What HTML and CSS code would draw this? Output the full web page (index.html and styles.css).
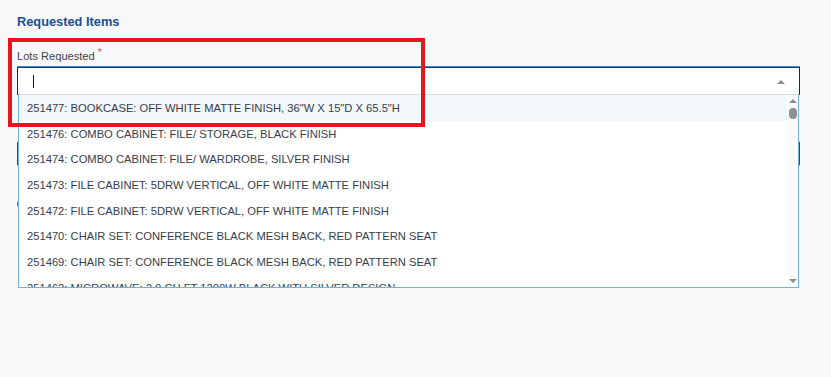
FILE: index.html
```html
<!DOCTYPE html>
<html lang="en">
<head>
    <meta charset="UTF-8">
    <meta name="viewport" content="width=device-width, initial-scale=1.0">
    <title>Requested Items</title>
    <link rel="stylesheet" href="styles.css">
</head>
<body>
    <div class="section">
        <h2 class="section-title">Requested Items</h2>
        <div class="form-group">
            <label for="lots">Lots Requested<span class="required">*</span></label>
            <div class="select-box">
                <div class="select-input">
                    <span class="caret"></span>
                    <span class="arrow-up"></span>
                </div>
                <ul class="options">
                    <li class="active">251477: BOOKCASE: OFF WHITE MATTE FINISH, 36"W X 15"D X 65.5"H</li>
                    <li>251476: COMBO CABINET: FILE/ STORAGE, BLACK FINISH</li>
                    <li>251474: COMBO CABINET: FILE/ WARDROBE, SILVER FINISH</li>
                    <li>251473: FILE CABINET: 5DRW VERTICAL, OFF WHITE MATTE FINISH</li>
                    <li>251472: FILE CABINET: 5DRW VERTICAL, OFF WHITE MATTE FINISH</li>
                    <li>251470: CHAIR SET: CONFERENCE BLACK MESH BACK, RED PATTERN SEAT</li>
                    <li>251469: CHAIR SET: CONFERENCE BLACK MESH BACK, RED PATTERN SEAT</li>
                    <li>251462: MICROWAVE: 2.0 CU FT 1200W BLACK WITH SILVER DESIGN</li>
                </ul>
                <div class="scrollbar">
                    <span class="sb-up"></span>
                    <span class="sb-thumb"></span>
                    <span class="sb-down"></span>
                </div>
            </div>
        </div>
        <div class="add-button"></div>
        <div class="radio-row"><span class="radio"></span></div>
    </div>
    <div class="highlight"></div>
</body>
</html>
```

FILE: styles.css
```css
body {
    font-family: 'Liberation Sans', Arial, sans-serif;
    margin: 0;
    padding: 0;
    background-color: #f7f8fa;
    height: 377px;
    overflow: hidden;
}
.section {
    padding: 13px 31px 0 17px;
}
.section-title {
    margin: 0;
    font-size: 12.8px;
    font-weight: bold;
    color: #1c4f8d;
    line-height: 18px;
}
.form-group {
    margin-top: 18px;
}
.form-group label {
    display: block;
    font-size: 11.1px;
    line-height: 14px;
    color: #444;
    margin-bottom: 3px;
}
.required {
    color: #e0474c;
    font-size: 10px;
    position: relative;
    top: -4px;
    left: 3px;
}
.select-box {
    position: relative;
}
.select-input {
    height: 26px;
    background: #fff;
    border: 1px solid #1e2a36;
    border-top-color: #1a3c64;
    box-shadow: 0 -1px 0 #3b8fdc;
    display: flex;
    align-items: center;
    justify-content: space-between;
    padding: 0 14px 0 15px;
}
.caret {
    width: 1px;
    height: 13px;
    background: #111;
}
.arrow-up {
    width: 0;
    height: 0;
    border-left: 4px solid transparent;
    border-right: 4px solid transparent;
    border-bottom: 4px solid #8a8a8a;
    margin-top: 2px;
}
.options {
    position: absolute;
    top: 27px;
    left: 1px;
    right: 1px;
    height: 192px;
    margin: 0;
    padding: 0;
    list-style: none;
    background: #fff;
    border: 1px solid #6fb1ea;
    border-top: 1px solid #dcdcdc;
    overflow: hidden;
    z-index: 2;
}
.options li {
    height: 25.7px;
    line-height: 26.5px;
    padding-left: 8px;
    font-size: 11.2px;
    color: #383d4c;
    white-space: nowrap;
}
.options li.active {
    background: #f2f7fc;
    margin-right: 11px;
}
.scrollbar {
    position: absolute;
    top: 28px;
    right: 2px;
    width: 10px;
    height: 192px;
    background: #fafafa;
    z-index: 3;
}
.sb-up, .sb-down {
    position: absolute;
    left: 1px;
    width: 0;
    height: 0;
    border-left: 4px solid transparent;
    border-right: 4px solid transparent;
}
.sb-up {
    top: 4px;
    border-bottom: 4px solid #8f8f8f;
}
.sb-down {
    bottom: 4px;
    border-top: 4px solid #8f8f8f;
}
.sb-thumb {
    position: absolute;
    top: 13px;
    left: 1px;
    width: 8px;
    height: 11px;
    border-radius: 4px;
    background: #8f8f8f;
}
.add-button {
    margin-top: 46px;
    height: 25px;
    background: #234a7a;
    border-radius: 2px;
}
.radio-row {
    margin-top: 32px;
    height: 12px;
}
.radio {
    display: block;
    width: 10px;
    height: 10px;
    border: 1px solid #555;
    border-radius: 50%;
    background: #fff;
}
.highlight {
    position: absolute;
    left: 8px;
    top: 38px;
    width: 409px;
    height: 81px;
    border: 4px solid #e4161e;
    pointer-events: none;
    z-index: 5;
}
```
